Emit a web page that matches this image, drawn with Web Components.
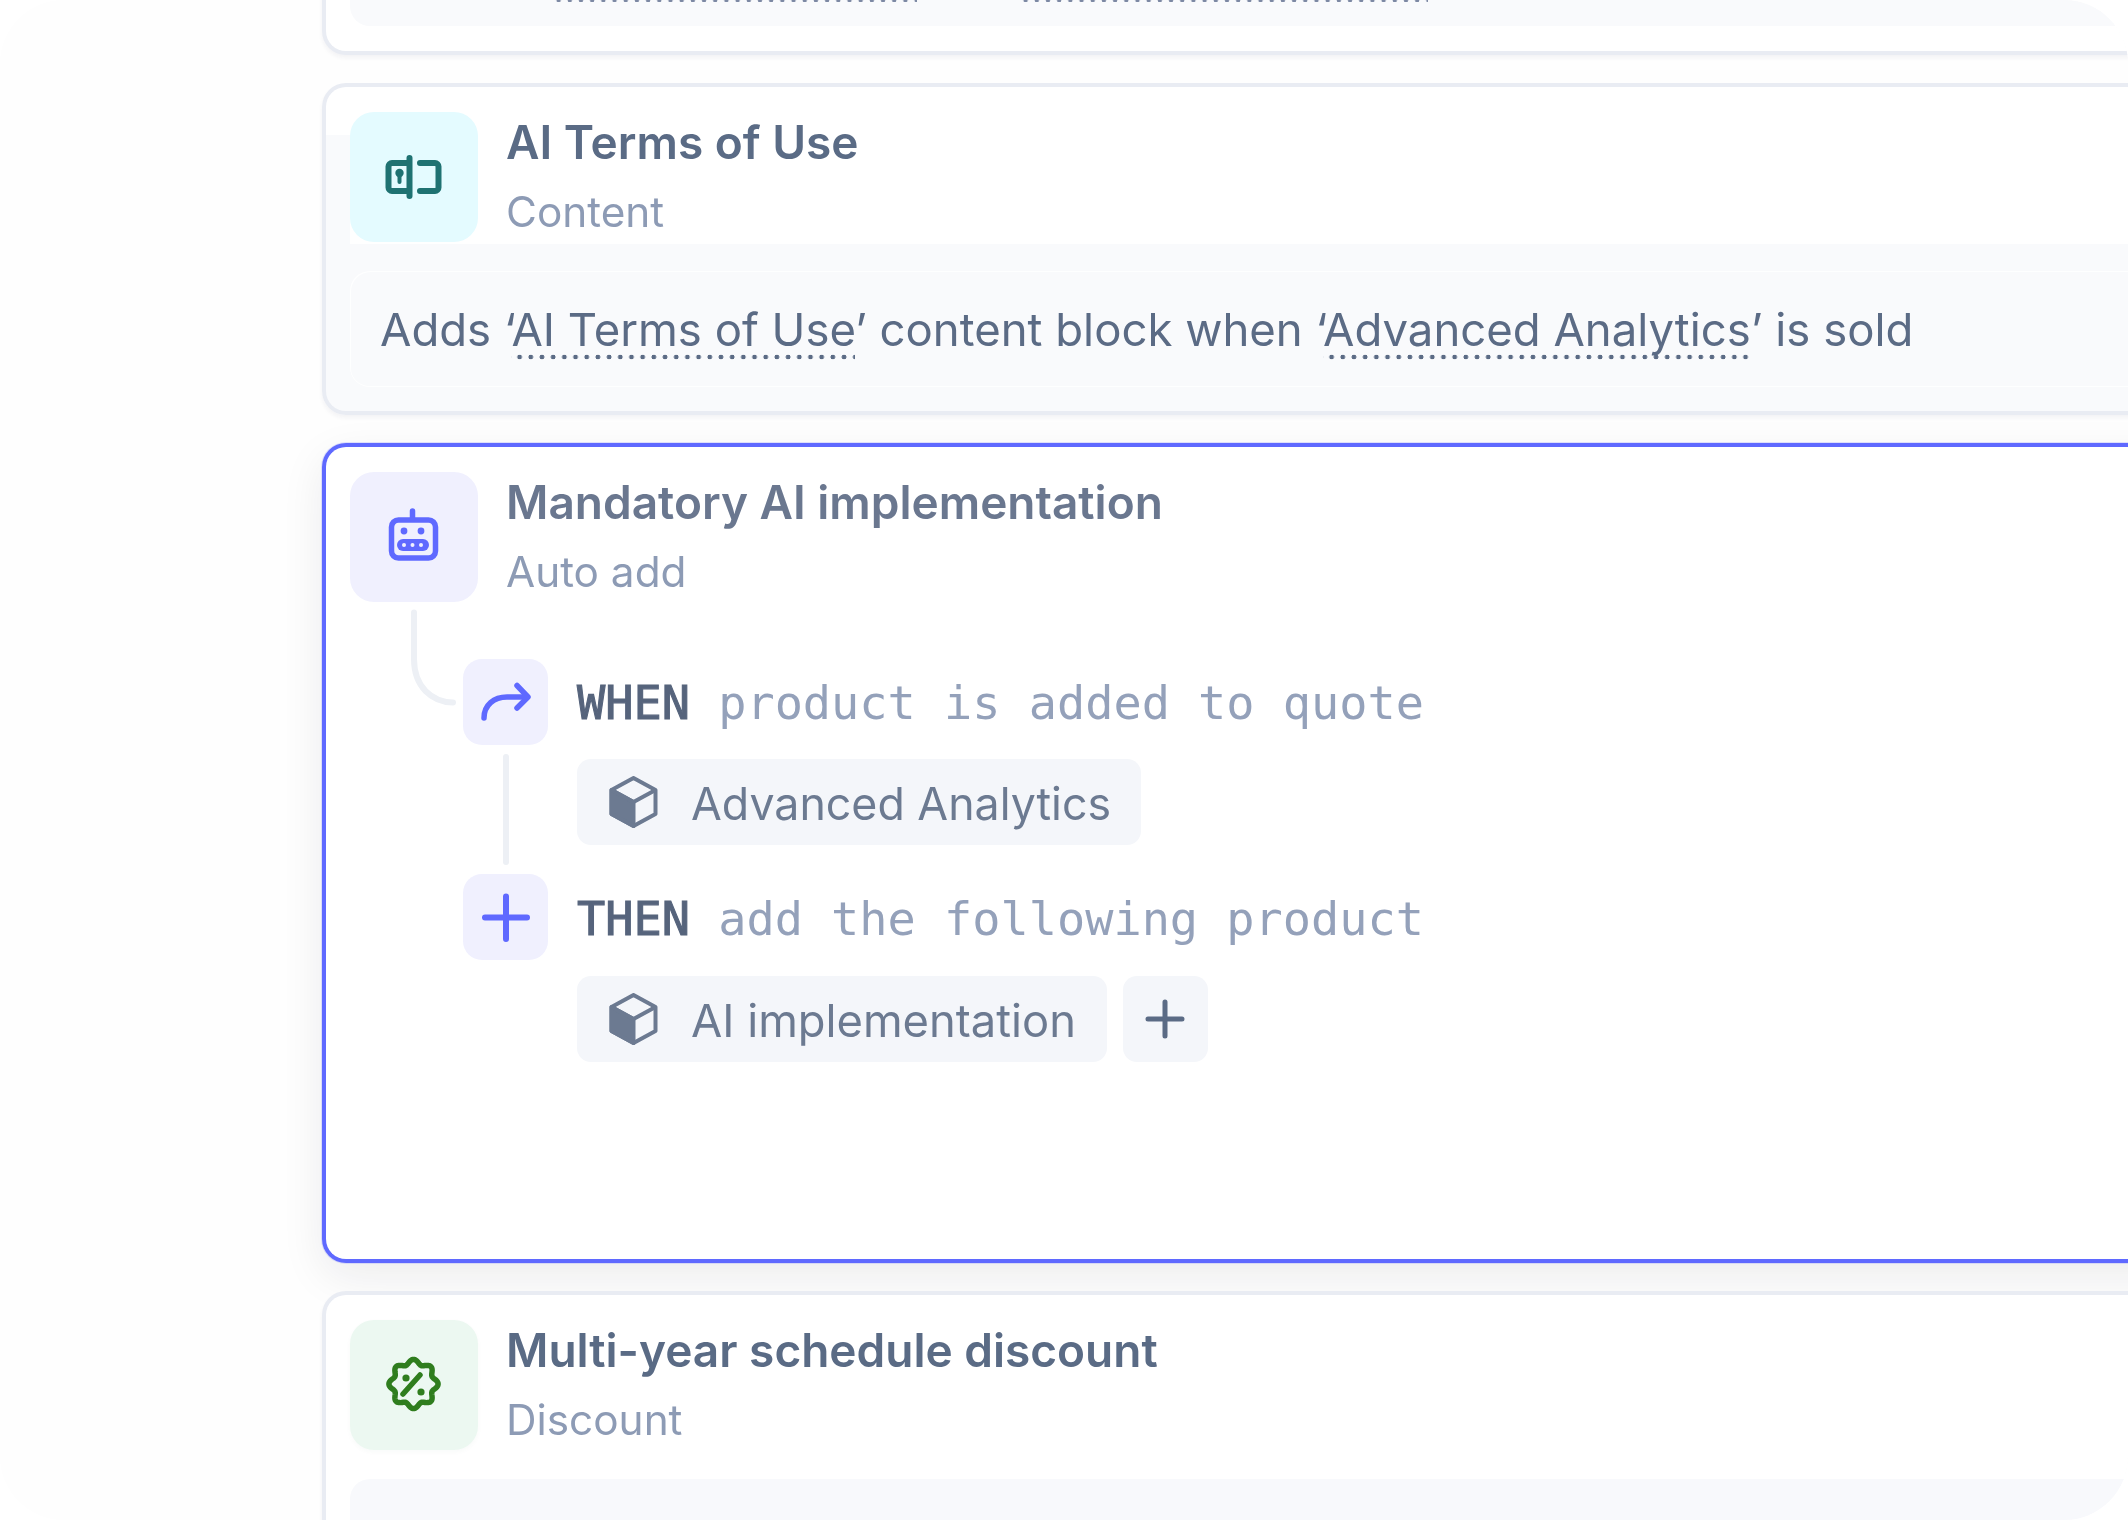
<!DOCTYPE html>
<html lang="en"><head><meta charset="utf-8"><title>Rules</title>
<style>
html,body{margin:0;padding:0;background:#fff}
</style></head><body>
<rule-board>
  <rule-card style="--h:255px;margin-top:-200px">
    <rule-panel stub><dot-ref bar style="width:364px"></dot-ref><dot-ref bar style="width:408px;margin-left:103px"></dot-ref></rule-panel>
  </rule-card>

  <rule-card strip style="--h:332px">
    <rule-head title="AI Terms of Use" sub="Content"><tile-icon kind="terms" slot="icon"></tile-icon></rule-head>
    <rule-panel>Adds ‘<dot-ref>AI Terms of Use</dot-ref>’ content block when ‘<dot-ref>Advanced Analytics</dot-ref>’ is sold</rule-panel>
  </rule-card>

  <rule-card active style="--h:820px">
    <rule-head muted title="Mandatory AI implementation" sub="Auto add"><tile-icon kind="robot" slot="icon"></tile-icon></rule-head>
    <rule-flow>
      <flow-step slot="s1" kind="arrow" word="WHEN" rest="product is added to quote"></flow-step>
      <item-chip slot="c1" style="font-size:44.700px;padding-right:30px">Advanced Analytics</item-chip>
      <flow-step slot="s2" kind="plus" word="THEN" rest="add the following product" style="--nudge:2px"></flow-step>
      <item-chip slot="c2" style="font-size:45.300px">AI implementation</item-chip>
      <add-button slot="c2"></add-button>
    </rule-flow>
  </rule-card>

  <rule-card style="--h:400px">
    <rule-head title="Multi-year schedule discount" sub="Discount"><tile-icon kind="badge" slot="icon"></tile-icon></rule-head>
    <rule-panel tall></rule-panel>
  </rule-card>
</rule-board>
<script>
function def(name, css, html, init){
  customElements.define(name, class extends HTMLElement{
    connectedCallback(){
      if(this.shadowRoot) return;
      const r=this.attachShadow({mode:'open'});
      r.innerHTML='<style>'+css+'</style>'+(typeof html==='function'?html(this):html);
      if(init) init(r,this);
    }
  });
}
const INTER='Inter,"Liberation Sans",sans-serif';
def('rule-board',`
  :host{display:block;width:2128px;height:1520px;overflow:hidden}
  .frame{box-sizing:border-box;width:2128px;height:1520px;overflow:hidden;border-radius:64px;background:#fefefe;
    padding-left:322px;display:flex;flex-direction:column;gap:28px;font-family:${INTER};filter:blur(.5px)}
`,`<div class="frame"><slot></slot></div>`);

def('rule-card',`
  :host{display:block;box-sizing:border-box;width:1900px;height:var(--h);flex:none;border:4px solid #e9ecf3;border-radius:24px 0 0 24px;border-right:0;
    background:#fff;box-shadow:0 3px 4px rgba(30,40,70,.05);padding-top:25px;overflow:visible}
  :host([strip]){background:linear-gradient(#fff 48px,#f9fafc 48px)}
  :host([active]){border:4px solid #5f69ff;border-right:0;box-shadow:0 0 0 1px rgba(95,105,255,.18),0 14px 44px rgba(20,24,40,.08)}
`,`<slot></slot>`);

def('rule-head',`
  :host{display:flex;gap:28px;height:132px;margin-left:24px;background:#fff;align-items:flex-start}
  .t{font-size:46px;font-weight:600;line-height:60px;color:#5a6b85;white-space:nowrap}
  :host([muted]) .t{color:#6a778f}
  .s{font-size:42.300px;font-weight:400;line-height:60px;margin-top:10px;color:#8d9bb5;white-space:nowrap}
`,h=>`<slot name="icon"></slot><div><div class="t">${h.getAttribute('title')}</div><div class="s">${h.getAttribute('sub')}</div></div>`);

const ICONS={
 terms:`<svg width="128" height="130" viewBox="0 1 128 130" fill="none" stroke="#1f7272" stroke-width="6" stroke-linecap="round" stroke-linejoin="round">
   <path d="M59 52H42a3.500 3.500 0 0 0-3.500 3.500V76.500a3.500 3.500 0 0 0 3.500 3.500H59"/><path d="M59.500 47V85"/>
   <path d="M70 52H85a3.500 3.500 0 0 1 3.500 3.500V76.500a3.500 3.500 0 0 1-3.500 3.500H70"/>
   <circle cx="49.500" cy="62" r="4.200" fill="#1f7272" stroke="none"/><path d="M49.500 62V71" stroke-width="4"/></svg>`,
 robot:`<svg width="128" height="130" viewBox="1 0 128 130" fill="none" stroke="#5f69ff" stroke-width="5.500" stroke-linecap="round" stroke-linejoin="round">
   <rect x="42.500" y="48" width="44" height="38" rx="7"/><path d="M63.500 39V47"/>
   <circle cx="55" cy="59" r="3.400" fill="#5f69ff" stroke="none"/><circle cx="72" cy="59" r="3.400" fill="#5f69ff" stroke="none"/>
   <rect x="48" y="67" width="32" height="12" rx="6" fill="#5f69ff" stroke="none"/>
   <circle cx="55" cy="73" r="2" fill="#f0f0ff" stroke="none"/><circle cx="63.500" cy="73" r="2" fill="#f0f0ff" stroke="none"/><circle cx="72" cy="73" r="2" fill="#f0f0ff" stroke="none"/></svg>`,
 badge:`<svg width="128" height="130" viewBox="0 0 128 130" fill="none" stroke="#2f7d1e" stroke-width="5.500" stroke-linecap="round" stroke-linejoin="round">
   <path class="scallop"/><path d="M70 55L53 74"/>
   <circle cx="56" cy="58" r="3.600" fill="#2f7d1e" stroke="none"/><circle cx="71" cy="72" r="3.600" fill="#2f7d1e" stroke="none"/></svg>`,
 arrow:`<svg width="85" height="86" viewBox="0 0 85 86" fill="none" stroke="#5f69ff" stroke-width="5.500" stroke-linecap="round" stroke-linejoin="round">
   <path d="M21 59C21 46 31 38 44 38H64"/><path d="M54 26.500L65 38L54 49"/></svg>`,
 plus:`<svg width="85" height="86" viewBox="0 0 85 86" fill="none" stroke="#5f69ff" stroke-width="6" stroke-linecap="round">
   <path d="M43 22.500V65M22 43.500H64"/></svg>`
};
const BG={terms:'#e4fbff',robot:'#f0f0fe',badge:'#ecf8f1',arrow:'#f0f0fe',plus:'#f0f0fe'};
def('tile-icon',`
  :host{display:block;flex:none;width:128px;height:130px;border-radius:24px;background:var(--bg)}
  :host([small]){width:85px;height:86px;border-radius:19px}
  svg{display:block}
`,h=>ICONS[h.getAttribute('kind')],(r,h)=>{
  h.style.setProperty('--bg',BG[h.getAttribute('kind')]);
  const p=r.querySelector('.scallop');
  if(p){let d='';for(let i=0;i<=160;i++){const a=i/160*Math.PI*2,R=22.300+2.300*Math.cos(8*a);
    d+=(i?'L':'M')+(63.500+R*Math.cos(a)).toFixed(2)+' '+(64+R*Math.sin(a)).toFixed(2);}
    p.setAttribute('d',d+'Z');}
  if(h.getAttribute('kind')==='badge'){h.style.boxShadow='0 2px 5px rgba(40,90,60,.03)';}
});

def('rule-panel',`
  :host{display:block;box-sizing:border-box;height:116px;margin-top:27px;margin-left:24px;border-radius:20px 0 0 20px;background:#f9fafc;
    box-shadow:inset 1px 1px 0 rgba(255,255,255,.85),inset 0 -1px 0 rgba(255,255,255,.85);color:#5b6b85;font-size:45.500px;line-height:118px;padding-left:30px;white-space:nowrap}
  :host([stub]){height:222px;padding:194px 0 0 203px;line-height:0;font-size:0;border-radius:0 0 0 20px;box-shadow:none;background:#f9fafc;margin-top:-25px}
  :host([tall]){height:300px;margin-top:27px;box-shadow:none;background:#f8f9fc}
`,`<slot></slot>`);

def('dot-ref',`
  :host{display:inline;padding-bottom:3px;background:radial-gradient(circle at 50% 50%,#5b6b85 2.100px,transparent 2.600px) 3px 100%/11.200px 6px repeat-x}
  :host([bar]){display:inline-block;height:4px;padding:0;background:radial-gradient(circle at 50% 50%,#7c88a3 2px,transparent 2.500px) 0 0/11.200px 4px repeat-x}
`,`<slot></slot>`);

def('rule-flow',`
  :host{display:grid;grid-template-columns:137px 85px 1fr;grid-template-rows:86px 129px 86px auto;padding-top:50px;margin-top:5px}
  .curve{grid-column:1;grid-row:1;margin-top:-50px}
  .curve svg{display:block}
  .s1{grid-column:2/4;grid-row:1}.s2{grid-column:2/4;grid-row:3}
  .rail{grid-column:2;grid-row:2;width:6px;height:111px;margin:9px 0 0 40px;border-radius:3px;background:#edf0f5}
  .c1{grid-column:3;grid-row:2;margin:14px 0 0 29px;display:flex;gap:16px;align-items:flex-start}
  .c2{grid-column:3;grid-row:4;margin:16px 0 0 29px;display:flex;gap:16px;align-items:flex-start}
`,`<div class="curve"><svg width="137" height="100" viewBox="0 0 137 100" fill="none" stroke="#edf0f5" stroke-width="6" stroke-linecap="round"><path d="M88 3.500V50C88 78 106 93 127 93.500"/></svg></div>
  <div class="s1"><slot name="s1"></slot></div><div class="rail"></div><div class="c1"><slot name="c1"></slot></div>
  <div class="s2"><slot name="s2"></slot></div><div class="c2"><slot name="c2"></slot></div>`);

def('flow-step',`
  :host{display:flex;align-items:center;gap:29px;height:86px;font-family:"DejaVu Sans Mono","Liberation Mono",monospace;font-size:46.900px;white-space:pre}
  b{font-weight:400;color:#56647c;-webkit-text-stroke:1.100px #56647c}
  span{color:#94a1ba}
  .txt{padding-top:var(--nudge,1px)}
`,h=>`<tile-icon small kind="${h.getAttribute('kind')}"></tile-icon><div class="txt"><b>${h.getAttribute('word')}</b><span> ${h.getAttribute('rest')}</span></div>`);

def('item-chip',`
  :host{display:flex;align-items:center;box-sizing:border-box;height:86px;padding:0 31px 0 32px;gap:33px;border-radius:14px;background:#f4f6fa;color:#6c7a91;font-size:45px;white-space:nowrap}
  svg{display:block;flex:none}
  .l{padding-top:3px}
`,`<svg width="49" height="52" viewBox="0 0 49 52" stroke="#6c7a91" stroke-width="4" stroke-linejoin="round" fill="none">
   <path d="M2.500 14V38L24.500 50V26Z" fill="#6c7a91"/><path d="M24.500 2L46.500 14V38L24.500 50L2.500 38V14Z"/><path d="M2.500 14L24.500 26L46.500 14"/></svg><div class="l"><slot></slot></div>`);

def('add-button',`
  :host{display:flex;align-items:center;justify-content:center;width:85px;height:86px;border-radius:14px;background:#f4f6fa}
  svg{display:block}
`,`<svg width="40" height="40" viewBox="0 0 40 40" stroke="#5b6b85" stroke-width="5" stroke-linecap="round" fill="none"><path d="M20 3V37M3 20H37"/></svg>`);
</script>
</body></html>
